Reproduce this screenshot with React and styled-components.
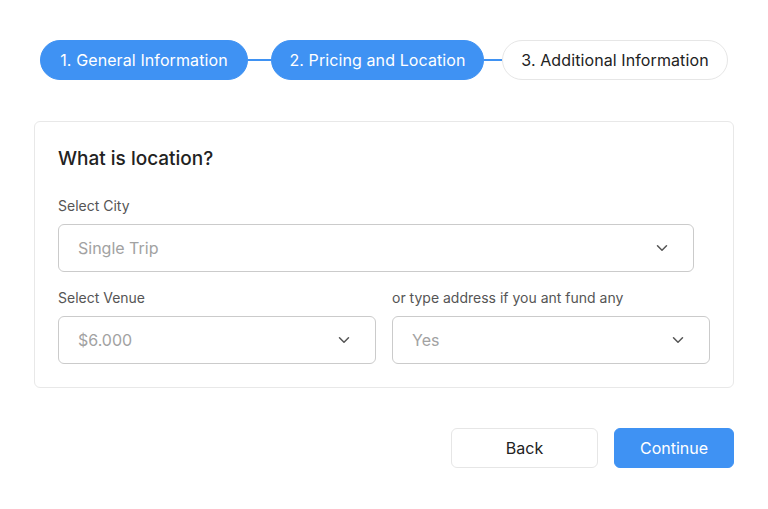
import styled, { createGlobalStyle } from 'styled-components';
import { ChevronDown } from 'lucide-react';

const blue = '#3f92f3';

const GlobalStyle = createGlobalStyle`
  body {
    margin: 0;
    background: #fff;
    font-family: Inter, "Noto Sans", sans-serif;
    color: #222;
  }
`;

const Page = styled.div`
  width: 700px;
  margin-left: 34px;
  padding-top: 40px;
`;

const Steps = styled.div`
  display: flex;
  align-items: center;
  padding: 0 6px;
`;

const Step = styled.div`
  width: ${({ w }) => w}px;
  height: 40px;
  box-sizing: border-box;
  display: flex;
  align-items: center;
  justify-content: center;
  border-radius: 20px;
  font-size: 16px;
  letter-spacing: 0.1px;
  white-space: nowrap;
  ${({ active }) =>
    active
      ? `background: ${blue}; color: #fff; border: 1px solid ${blue};`
      : `background: #fff; color: #222; border: 1px solid #e6e6e6;`}
`;

const Connector = styled.div`
  width: ${({ w }) => w}px;
  height: 2px;
  background: ${blue};
`;

const Card = styled.div`
  margin-top: 41px;
  border: 1px solid #e8e8e8;
  border-radius: 6px;
  padding: 24px 23px 23px;
`;

const Title = styled.h2`
  margin: 0;
  font-size: 19px;
  font-weight: 500;
  line-height: 26px;
  color: #222;
`;

const Field = styled.div`
  display: flex;
  flex-direction: column;
  width: ${({ width }) => width || 'auto'};
  flex: ${({ grow }) => (grow ? 1 : 'none')};
`;

const Label = styled.label`
  font-size: 14px;
  color: #555;
  line-height: 20px;
  margin-bottom: 8px;
`;

const Select = styled.div`
  height: 48px;
  box-sizing: border-box;
  border: 1px solid #cbcbcb;
  border-radius: 6px;
  display: flex;
  align-items: center;
  justify-content: space-between;
  padding: 0 22px 0 19px;
  font-size: 16px;
  color: #a2a2a2;
  svg {
    color: #555;
  }
`;

const FirstRow = styled.div`
  margin-top: 24px;
`;

const Row = styled.div`
  display: flex;
  gap: 16px;
  margin-top: 16px;
`;

const Actions = styled.div`
  display: flex;
  justify-content: flex-end;
  gap: 16px;
  margin-top: 40px;
`;

const Button = styled.button`
  height: 40px;
  border-radius: 6px;
  font-family: inherit;
  font-size: 16px;
  width: ${({ w }) => w}px;
  ${({ primary }) =>
    primary
      ? `background: ${blue}; color: #fff; border: 1px solid ${blue};`
      : `background: #fff; color: #222; border: 1px solid #e6e6e6;`}
`;

const Dropdown = ({ value }) => (
  <Select>
    <span>{value}</span>
    <ChevronDown size={18} strokeWidth={2} />
  </Select>
);

const App = () => {
  return (
    <Page>
      <GlobalStyle />
      <Steps>
        <Step active w={208}>1. General Information</Step>
        <Connector w={23} />
        <Step active w={213}>2. Pricing and Location</Step>
        <Connector w={18} />
        <Step w={226}>3. Additional Information</Step>
      </Steps>

      <Card>
        <Title>What is location?</Title>
        <FirstRow>
          <Field width="636px">
            <Label>Select City</Label>
            <Dropdown value="Single Trip" />
          </Field>
        </FirstRow>
        <Row>
          <Field grow>
            <Label>Select Venue</Label>
            <Dropdown value="$6.000" />
          </Field>
          <Field grow>
            <Label>or type address if you ant fund any</Label>
            <Dropdown value="Yes" />
          </Field>
        </Row>
      </Card>

      <Actions>
        <Button w={147}>Back</Button>
        <Button primary w={120}>Continue</Button>
      </Actions>
    </Page>
  );
};

export default App;
